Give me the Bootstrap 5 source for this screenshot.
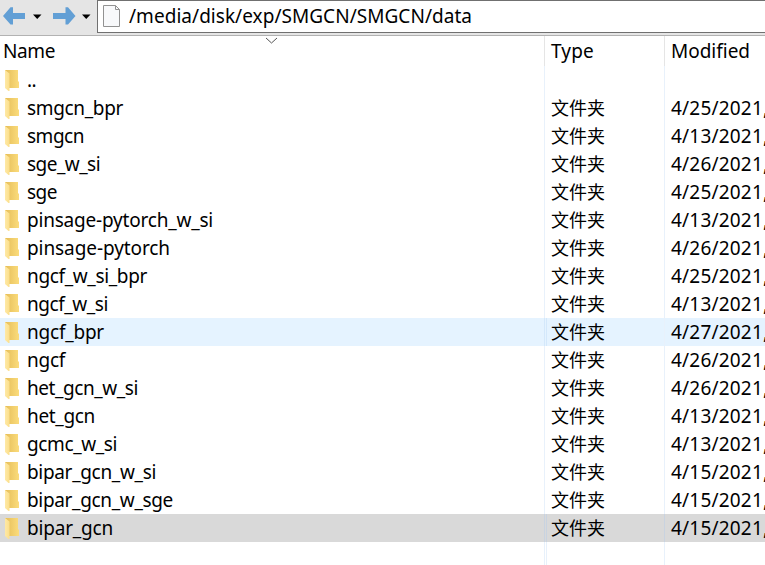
<!DOCTYPE html>
<html lang="en">
<head>
<meta charset="utf-8">
<meta name="viewport" content="width=device-width, initial-scale=1">
<title>Remote files</title>
<link href="https://cdn.jsdelivr.net/npm/bootstrap@5.3.0/dist/css/bootstrap.min.css" rel="stylesheet">
<style>
body{font:19px/28px "Noto Sans","Noto Sans CJK SC",sans-serif;color:#000;background:#fff;height:565px;cursor:default}
.toolbar{height:36px;background:#e5e5e5;border-bottom:1px solid #b2b2b2;flex:none}
.nav-tools{width:97px;flex:none}
.address{height:33px;border:1px solid #707070;border-right:0;padding-left:5px}
.address span{margin-left:9px;line-height:31px}
.heads{height:30px;line-height:31px;flex:none}
.cell-name{width:544px;flex:none}
.cell-type{width:120px;flex:none;padding-left:6px;border-left:1px solid #e8f1fb}
.cell-date{width:101px;flex:none;padding-left:6px;border-left:1px solid #e8f1fb}
.heads .cell-type,.heads .cell-date{border-color:#e5e5e5}
.heads .cell-name{padding-left:3px}
.file-row{height:28px;flex:none}
.file-row .cell-name{padding-left:5px}
.file-row svg{margin:4px 8px 0 0;flex:none}
.file-row .cell-type{font-size:18px;line-height:29px}
.hovered{background:#e5f3ff}
.hovered .cell-type{border-color:#d4e8fb;box-shadow:inset 1px 0 #e5f3ff,inset 2px 0 #d4e8fb}
.chosen{background:#d9d9d9}
.chosen .cell-type,.chosen .cell-date{border-color:#c9d3e0}
.chosen .cell-type{box-shadow:inset 1px 0 #d9d9d9,inset 2px 0 #c9d3e0}
.blank .cell-type{box-shadow:inset 1px 0 #fff,inset 2px 0 #e8f1fb}
.sorter{left:265px;top:1px}
</style>
<script src="https://cdn.jsdelivr.net/npm/bootstrap@5.3.0/dist/js/bootstrap.bundle.min.js"></script>
</head>
<body class="d-flex flex-column overflow-hidden text-nowrap m-0">
<svg width="0" height="0" class="position-absolute"><defs>
<linearGradient id="gb"><stop offset="0" stop-color="#e5bd58"/><stop offset="1" stop-color="#fbdc7c"/></linearGradient>
<linearGradient id="gf"><stop offset="0" stop-color="#ffe9a6"/><stop offset="1" stop-color="#fbdf8b"/></linearGradient>
<symbol id="folder" viewBox="0 0 14 22"><path d="M0 0H13V11L14 12V18H4L0 17Z" fill="url(#gb)"/><path d="M0 0L4.500 3.500V21L3.500 21L0 18Z" fill="url(#gf)"/></symbol>
</defs></svg>
<header class="toolbar d-flex">
<div class="nav-tools d-flex">
<svg width="97" height="35"><path d="M3 16L10.500 7.300H13V13H25V19H13V24.500H10.500Z" fill="#629fd5"/><path d="M75.500 16L68 7.300H65.500V13H53V19H65.500V24.500H68Z" fill="#629fd5"/><path d="M33 14.500H41.500L37.200 19Z M82 14.500H90.500L86.200 19Z"/></svg>
</div>
<div class="address flex-fill d-flex align-items-center bg-white"><svg width="17" height="23"><path d="M.5 .5H12.500L16.500 4.500V21.500H.5Z" fill="#f8f9fb" stroke="#929292"/><path d="M12.500 .5V4.500H16.500" fill="none" stroke="#929292"/></svg><span class="t" data-w="343">/media/disk/exp/SMGCN/SMGCN/data</span></div>
</header>
<div class="heads d-flex position-relative"><svg class="sorter position-absolute" width="13" height="8"><path d="M1 1L6.500 6L12 1" fill="none" stroke="#555"/></svg><div class="cell-name"><span class="t" data-w="52">Name</span></div><div class="cell-type"><span class="t" data-w="43">Type</span></div><div class="cell-date"><span class="t" data-w="79">Modified</span></div></div>
<main id="files" class="flex-fill d-flex flex-column"></main>
<script>
const rows=[["..","",9],["smgcn_bpr","4/25/2021",96],["smgcn","4/13/2021",57],["sge_w_si","4/26/2021",73],["sge","4/25/2021",30],["pinsage-pytorch_w_si","4/13/2021",186],["pinsage-pytorch","4/26/2021",143],["ngcf_w_si_bpr","4/25/2021",120],["ngcf_w_si","4/13/2021",81],["ngcf_bpr","4/27/2021",77],["ngcf","4/26/2021",38],["het_gcn_w_si","4/26/2021",111],["het_gcn","4/13/2021",68],["gcmc_w_si","4/13/2021",90],["bipar_gcn_w_si","4/15/2021",129],["bipar_gcn_w_sge","4/15/2021",146],["bipar_gcn","4/15/2021",86]];
const icon='<svg width="14" height="22"><use href="#folder"/></svg>';
document.getElementById("files").innerHTML=rows.map(([n,d,w])=>`<div class="file-row d-flex ${n==="ngcf_bpr"?"hovered":n==="bipar_gcn"?"chosen":""}"><div class="cell-name d-flex align-items-start">${icon}<span class="t" data-w="${w}">${n}</span></div><div class="cell-type">${d?"文件夹":""}</div><div class="cell-date overflow-hidden">${d?`<span class="t" data-w="92">${d}</span>,`:""}</div></div>`).join("")+'<div class="blank flex-fill d-flex"><div class="cell-name"></div><div class="cell-type"></div><div class="cell-date"></div></div>';
document.querySelectorAll(".t").forEach(e=>{e.style.letterSpacing=(e.dataset.w-e.getBoundingClientRect().width)/e.textContent.length+"px"});
</script>
</body>
</html>
